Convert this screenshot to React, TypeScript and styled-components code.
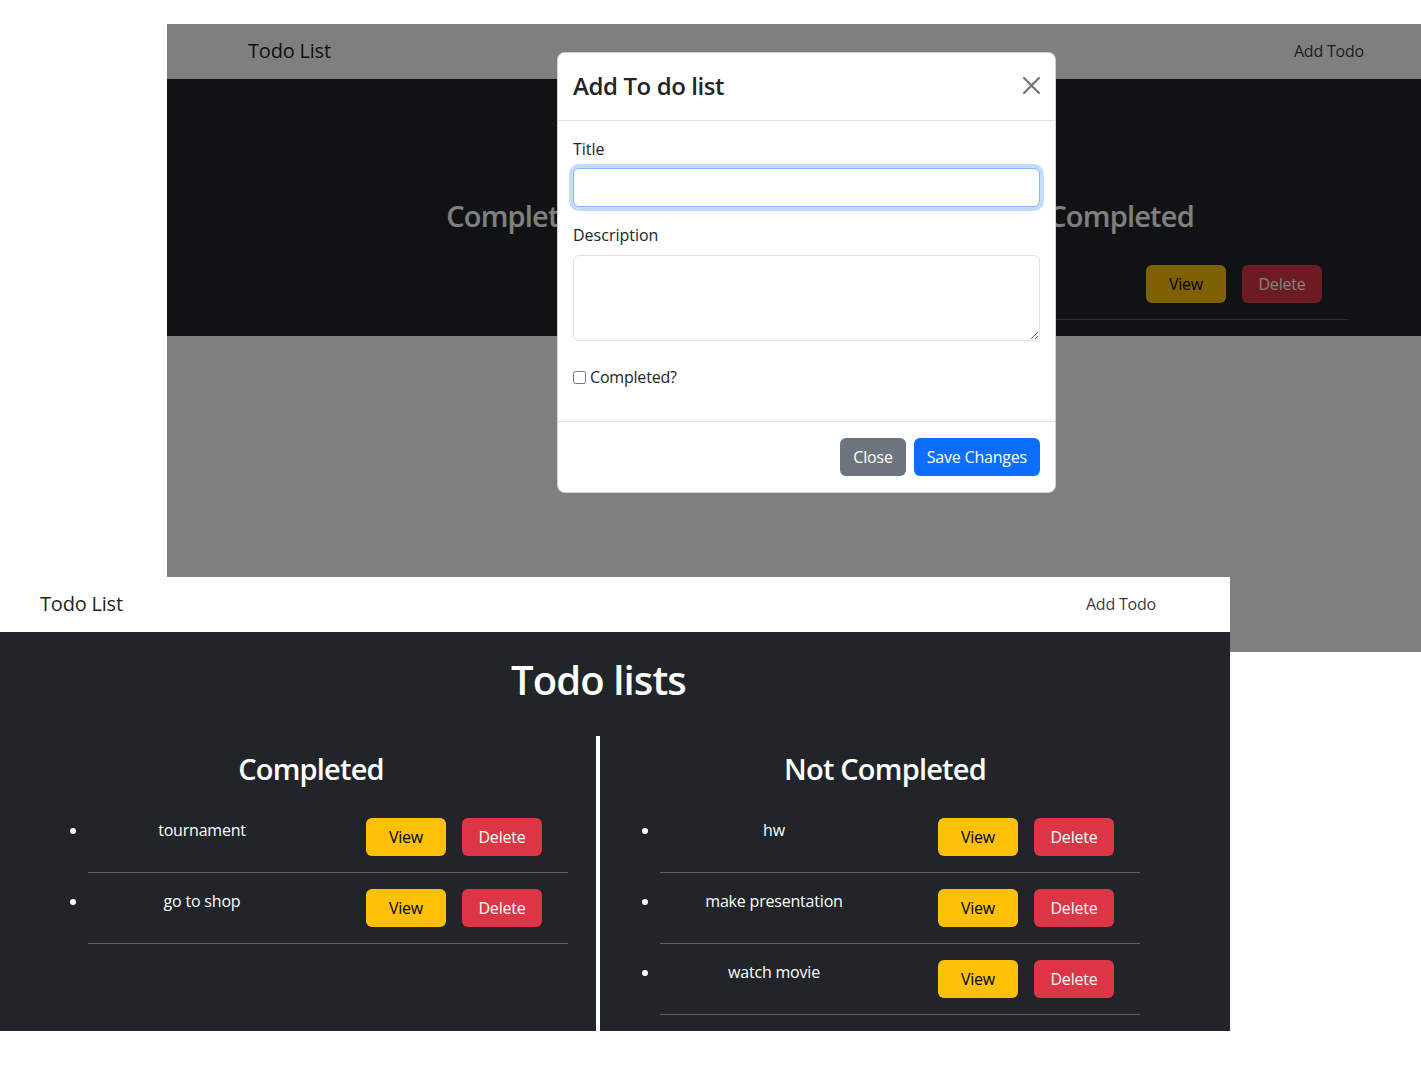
import React from "react";
import styled, { createGlobalStyle } from "styled-components";

const GlobalStyle = createGlobalStyle`
  html, body {
    margin: 0;
    padding: 0;
    background: #ffffff;
  }
  body {
    font-family: "Open Sans", "Noto Sans", "Liberation Sans", sans-serif;
    font-size: 16px;
    line-height: 1.5;
    color: #212529;
  }
  * { box-sizing: border-box; }
`;

const Stage = styled.div`
  width: 1421px;
  padding-top: 24px;
`;

const TopFrame = styled.div`
  position: relative;
  margin-left: 167px;
  width: 1254px;
  height: 628px;
  overflow: hidden;
  background: #ffffff;
`;

const BottomFrame = styled.div`
  position: relative;
  z-index: 1;
  margin-top: -75px;
  width: 1230px;
`;

const PageRoot = styled.div<{ $width: number }>`
  width: ${(p) => p.$width}px;
`;

const NavBar = styled.nav<{ $offset: number }>`
  height: 55px;
  display: flex;
  align-items: center;
  padding: 0 74px 0 ${(p) => 40 + p.$offset}px;
  background: #ffffff;
`;

const Brand = styled.span`
  font-size: 20px;
  line-height: 30px;
  margin-top: -2px;
  letter-spacing: -0.2px;
  color: rgba(0, 0, 0, 0.9);
`;

const NavLink = styled.span`
  margin-left: auto;
  margin-top: -2px;
  font-size: 16px;
  letter-spacing: -0.2px;
  color: rgba(0, 0, 0, 0.8);
`;

const Main = styled.main`
  background: #212529;
  color: #ffffff;
  padding-top: 24px;
`;

const Inner = styled.div<{ $offset: number }>`
  width: 1197px;
  margin-left: ${(p) => p.$offset}px;
`;

const PageTitle = styled.h1`
  margin: 0 0 32px;
  font-size: 40px;
  line-height: 48px;
  font-weight: 600;
  letter-spacing: -0.9px;
  text-align: center;
`;

const Columns = styled.div`
  display: grid;
  grid-template-columns: 570px 574px;
  margin-left: 26px;
`;

const Column = styled.section<{ $divider?: boolean }>`
  padding-top: 14px;
  border-left: ${(p) => (p.$divider ? "4px solid #ffffff" : "none")};
`;

const ColumnHeading = styled.h2`
  margin: 0 0 14px;
  font-size: 29px;
  line-height: 38px;
  font-weight: 600;
  letter-spacing: -0.8px;
  text-align: center;
`;

const List = styled.ul<{ $padLeft: number }>`
  margin: 0 0 16px;
  padding: 0 0 0 ${(p) => p.$padLeft}px;
  list-style: disc;
`;

const Item = styled.li`
  width: 480px;
  padding: 16px 0;
  border-bottom: 1px solid rgba(255, 255, 255, 0.27);
  &::marker {
    color: #ffffff;
  }
`;

const ItemRow = styled.div`
  display: flex;
  align-items: flex-start;
`;

const ItemTitle = styled.div`
  flex: 0 0 228px;
  text-align: center;
  line-height: 24px;
  letter-spacing: -0.2px;
`;

const ItemActions = styled.div`
  display: flex;
  gap: 16px;
  margin-left: 50px;
`;

const Btn = styled.button<{ $variant: "warning" | "danger" | "secondary" | "primary"; $fixed?: boolean }>`
  font-family: inherit;
  font-size: 16px;
  line-height: 24px;
  letter-spacing: -0.2px;
  height: 38px;
  padding: 6px 12px;
  border-radius: 6px;
  border: 1px solid transparent;
  cursor: pointer;
  width: ${(p) => (p.$fixed ? "80px" : "auto")};
  background: ${(p) =>
    p.$variant === "warning"
      ? "#ffc107"
      : p.$variant === "danger"
      ? "#dc3545"
      : p.$variant === "secondary"
      ? "#6c757d"
      : "#0d6efd"};
  color: ${(p) => (p.$variant === "warning" ? "#000000" : "#ffffff")};
`;

const Backdrop = styled.div`
  position: absolute;
  inset: 0;
  background: rgba(0, 0, 0, 0.5);
`;

const Modal = styled.div`
  position: absolute;
  top: 28px;
  left: 390px;
  width: 499px;
  background: #ffffff;
  border: 1px solid rgba(0, 0, 0, 0.175);
  border-radius: 8px;
  color: #212529;
`;

const ModalHeader = styled.div`
  display: flex;
  align-items: center;
  justify-content: space-between;
  padding: 15px 15px 17px 15px;
  border-bottom: 1px solid #dee2e6;
`;

const ModalTitle = styled.h4`
  margin: 0;
  font-size: 24px;
  line-height: 35px;
  font-weight: 600;
  letter-spacing: -0.4px;
`;

const CloseButton = styled.button`
  width: 18px;
  height: 18px;
  padding: 0;
  border: 0;
  background: transparent;
  display: flex;
  align-items: center;
  justify-content: center;
  opacity: 0.55;
  cursor: pointer;
`;

const ModalBody = styled.div`
  padding: 16px 15px;
`;

const Field = styled.div`
  margin-bottom: 16px;
`;

const Label = styled.label`
  display: block;
  margin-bottom: 8px;
  line-height: 24px;
`;

const TextInput = styled.input<{ $focused?: boolean }>`
  display: block;
  width: 100%;
  height: 39px;
  margin-top: -1px;
  padding: 6px 12px;
  font-family: inherit;
  font-size: 16px;
  border-radius: 6px;
  outline: none;
  border: 1px solid ${(p) => (p.$focused ? "#86b7fe" : "#dee2e6")};
  box-shadow: ${(p) => (p.$focused ? "0 0 0 4px rgba(13, 110, 253, 0.25)" : "none")};
`;

const TextArea = styled.textarea`
  display: block;
  width: 100%;
  height: 86px;
  padding: 6px 12px;
  font-family: inherit;
  font-size: 16px;
  border: 1px solid #dee2e6;
  border-radius: 6px;
  resize: vertical;
  outline: none;
`;

const CheckRow = styled.label`
  display: flex;
  align-items: center;
  margin: 24px 0 16px;
  line-height: 24px;
  letter-spacing: -0.2px;
`;

const CheckBox = styled.input`
  width: 13px;
  height: 13px;
  margin: 0 4px 0 0;
`;

const ModalFooter = styled.div`
  display: flex;
  justify-content: flex-end;
  gap: 8px;
  padding: 16px 15px;
  border-top: 1px solid #dee2e6;
`;

type Todo = { title: string };

const TodoItem = ({ title }: Todo) => (
  <Item>
    <ItemRow>
      <ItemTitle>{title}</ItemTitle>
      <ItemActions>
        <Btn $variant="warning" $fixed>View</Btn>
        <Btn $variant="danger" $fixed>Delete</Btn>
      </ItemActions>
    </ItemRow>
  </Item>
);

const TodoPage = ({
  offset,
  width,
  completed,
  notCompleted,
}: {
  offset: number;
  width: number;
  completed: Todo[];
  notCompleted: Todo[];
}) => (
  <PageRoot $width={width}>
    <NavBar $offset={offset}>
      <Brand>Todo List</Brand>
      <NavLink>Add Todo</NavLink>
    </NavBar>
    <Main>
      <Inner $offset={offset}>
        <PageTitle>Todo lists</PageTitle>
        <Columns>
          <Column>
            <ColumnHeading>Completed</ColumnHeading>
            <List $padLeft={62}>
              {completed.map((t) => (
                <TodoItem key={t.title} title={t.title} />
              ))}
            </List>
          </Column>
          <Column $divider>
            <ColumnHeading>Not Completed</ColumnHeading>
            <List $padLeft={60}>
              {notCompleted.map((t) => (
                <TodoItem key={t.title} title={t.title} />
              ))}
            </List>
          </Column>
        </Columns>
      </Inner>
    </Main>
  </PageRoot>
);

const CloseIcon = () => (
  <svg width="17" height="17" viewBox="0 0 16 16" fill="#000">
    <path d="M.293.293a1 1 0 0 1 1.414 0L8 6.586 14.293.293a1 1 0 1 1 1.414 1.414L9.414 8l6.293 6.293a1 1 0 0 1-1.414 1.414L8 9.414l-6.293 6.293a1 1 0 0 1-1.414-1.414L6.586 8 .293 1.707a1 1 0 0 1 0-1.414z" />
  </svg>
);

export default function App() {
  return (
    <>
      <GlobalStyle />
      <Stage>
        <TopFrame>
          <TodoPage offset={41} width={1271} completed={[]} notCompleted={[{ title: "hw" }]} />
          <Backdrop />
          <Modal>
            <ModalHeader>
              <ModalTitle>Add To do list</ModalTitle>
              <CloseButton aria-label="Close">
                <CloseIcon />
              </CloseButton>
            </ModalHeader>
            <ModalBody>
              <Field>
                <Label>Title</Label>
                <TextInput type="text" $focused />
              </Field>
              <Field>
                <Label>Description</Label>
                <TextArea />
              </Field>
              <CheckRow>
                <CheckBox type="checkbox" />
                Completed?
              </CheckRow>
            </ModalBody>
            <ModalFooter>
              <Btn $variant="secondary">Close</Btn>
              <Btn $variant="primary">Save Changes</Btn>
            </ModalFooter>
          </Modal>
        </TopFrame>
        <BottomFrame>
          <TodoPage
            offset={0}
            width={1230}
            completed={[{ title: "tournament" }, { title: "go to shop" }]}
            notCompleted={[{ title: "hw" }, { title: "make presentation" }, { title: "watch movie" }]}
          />
        </BottomFrame>
      </Stage>
    </>
  );
}
